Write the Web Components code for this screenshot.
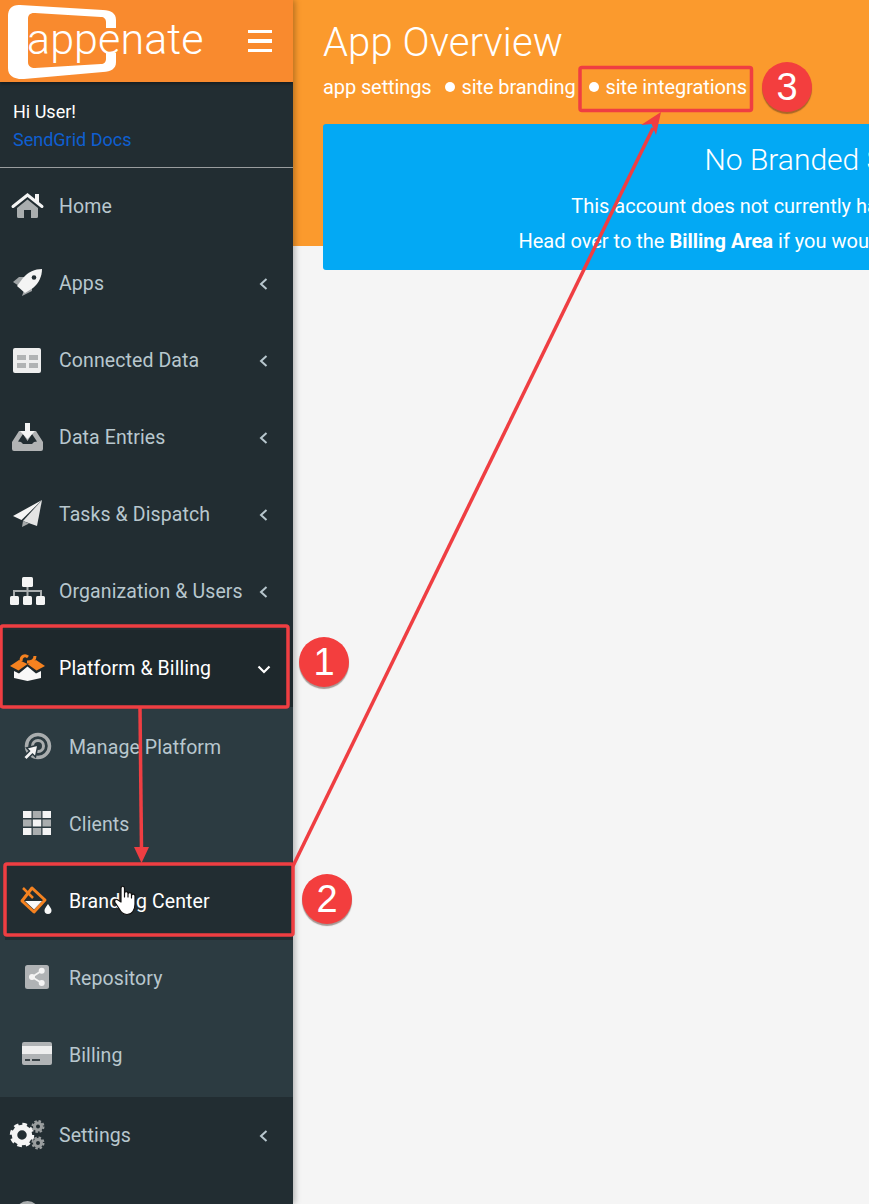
<!DOCTYPE html>
<html lang="en"><head><meta charset="utf-8"><title>App Overview</title>
<style>
html,body{margin:0;padding:0;height:1204px;overflow:hidden;background:#f5f5f5;font-family:Roboto,"Liberation Sans",sans-serif}
</style></head><body>
<app-shell>
  <side-bar slot="side">
    <nav-item label="Home" icon="home"></nav-item>
    <nav-item label="Apps" icon="rocket" chevron="left"></nav-item>
    <nav-item label="Connected Data" icon="table" chevron="left"></nav-item>
    <nav-item label="Data Entries" icon="inbox" chevron="left"></nav-item>
    <nav-item label="Tasks &amp; Dispatch" icon="plane" chevron="left"></nav-item>
    <nav-item label="Organization &amp; Users" icon="org" chevron="left"></nav-item>
    <nav-item label="Platform &amp; Billing" icon="box" chevron="down" active></nav-item>
    <nav-group>
      <nav-item sub label="Manage Platform" icon="target"></nav-item>
      <nav-item sub label="Clients" icon="grid"></nav-item>
      <nav-item sub label="Branding Center" icon="bucket" current></nav-item>
      <nav-item sub label="Repository" icon="share"></nav-item>
      <nav-item sub label="Billing" icon="card"></nav-item>
    </nav-group>
    <nav-item label="Settings" icon="gears" chevron="left"></nav-item>
    <nav-item label="" icon="circle"></nav-item>
  </side-bar>
  <page-header title="App Overview">
    <notice-box heading="No Branded Sites">
      <p>This account does not currently have any branded sites.</p>
      <p>Head over to the <b>Billing Area</b> if you would like to add a branded site.</p>
    </notice-box>
  </page-header>
  <guide-overlay slot="overlay"></guide-overlay>
</app-shell>
<script>
const ICONS={
home:`<path d="M7 17 17.5 8.5 28 17v8.5a1.5 1.5 0 0 1-1.5 1.5H21v-8h-7v8H8.500A1.500 1.500 0 0 1 7 25.500Z" fill="#a9adae"/><path d="M3 15.500 17.500 4 32 15.500" fill="none" stroke="#f4f4f4" stroke-width="3" stroke-linecap="round"/><path d="M25 3h4v9l-4-3Z" fill="#f4f4f4"/>`,
rocket:`<path d="M3 14 9 9h6l-6 9Z" fill="#9fa3a5"/><path d="M12 28l2-6 8-5v6Z" fill="#9fa3a5"/><path d="M32 1C25 1 18 4 13 10L7 18l8 7 8-5c6-5 9-12 9-19Z" fill="#f4f4f4"/><circle cx="24" cy="9.500" r="2.300" fill="#222d32"/>`,
table:`<rect x="3" y="3" width="28" height="25" rx="2" fill="#eeeeee"/><rect x="7" y="10" width="9" height="5" fill="#b1b3b4"/><rect x="19" y="10" width="9" height="5" fill="#b1b3b4"/><rect x="7" y="18" width="9" height="5" fill="#b1b3b4"/><rect x="19" y="18" width="9" height="5" fill="#b1b3b4"/>`,
inbox:`<path d="M9 9 2 20v7a2 2 0 0 0 2 2h27a2 2 0 0 0 2-2v-7L26 9h-3l-5.500 12L12 9Z" fill="#b1b3b4"/><path d="M6 19h6l2 3h7l2-3h6L24 10h-13Z" fill="#b1b3b4"/><path d="M8 19.500 13 12l4.500 7 4.500-7 5 7.500-3 .500-2 2h-9l-2-2Z" fill="#222d32"/><path d="M15 1h5v8h5l-7.500 8L10 9h5Z" fill="#f4f4f4"/>`,
plane:`<path d="M32 1 3 17l8.500 4Z" fill="#f4f4f4"/><path d="M32 1 13 22l14 5Z" fill="#e4e4e4"/><path d="M13 22l-1 6 7-3.500Z" fill="#a6a9aa"/>`,
org:`<path d="M17.500 11v9M4 20v-5h27v5" fill="none" stroke="#a9adae" stroke-width="2"/><rect x="12" y="1" width="11" height="10" rx="1.500" fill="#f4f4f4"/><rect x="0" y="20" width="9" height="9" rx="1.500" fill="#f4f4f4"/><rect x="13" y="20" width="9" height="9" rx="1.500" fill="#f4f4f4"/><rect x="26" y="20" width="9" height="9" rx="1.500" fill="#f4f4f4"/>`,
box:`<path d="M11 8C11 3 15 1.500 18 4M25 3c0 4-3 6-8 6" fill="none" stroke="#f58220" stroke-width="3"/><path d="M0 13 9 7l8.500 4-9 6.500Z" fill="#f58220"/><path d="M35 13 26 7l-8.500 4 9 6.500Z" fill="#f58220"/><path d="M4 18l5 2.500 8.500-7 8.500 7 5-2.500v7l-13.500 3L4 25Z" fill="#f8f8f8"/>`,
target:`<circle cx="18" cy="15" r="11.500" fill="none" stroke="#a9adae" stroke-width="3.500"/><circle cx="18" cy="15" r="5.500" fill="none" stroke="#a9adae" stroke-width="3"/><path d="M18 14 6.500 17l3 3L3.500 26l3 3 6-6 3 3Z" fill="#f4f4f4" stroke="#2c3b41" stroke-width="1.500"/>`,
grid:`<g fill="#f4f4f4"><rect x="3" y="3" width="8.500" height="7"/><rect x="22.500" y="3" width="8.500" height="7"/><rect x="12.750" y="11.500" width="8.500" height="7"/><rect x="3" y="20" width="8.500" height="7"/><rect x="22.500" y="20" width="8.500" height="7"/></g><g fill="#a9adae"><rect x="12.750" y="3" width="8.500" height="7"/><rect x="3" y="11.500" width="8.500" height="7"/><rect x="22.500" y="11.500" width="8.500" height="7"/><rect x="12.750" y="20" width="8.500" height="7"/></g>`,
bucket:`<path d="M12 3 25 15 14 27 2 16Z" fill="none" stroke="#f58220" stroke-width="3" stroke-linejoin="round"/><path d="M5 16h17l-8 8.500Z" fill="#f8f8f8"/><path d="M3 3 13 13" stroke="#f58220" stroke-width="2.500"/><path d="M28 19c-2 3-3.500 4.500-3.500 6.500a3.500 3.500 0 0 0 7 0c0-2-1.500-3.500-3.500-6.500Z" fill="#f8f8f8"/>`,
share:`<rect x="5" y="3" width="24" height="24" rx="2.500" fill="#b0b3b5"/><path d="M21.700 8.700 12 15l9.700 6" fill="none" stroke="#f4f4f4" stroke-width="1.800"/><circle cx="21.700" cy="8.700" r="3" fill="#f4f4f4"/><circle cx="12" cy="15" r="3" fill="#f4f4f4"/><circle cx="21.700" cy="21" r="3" fill="#f4f4f4"/>`,
card:`<rect x="2" y="3" width="30" height="23" rx="2" fill="#b0b3b5"/><rect x="2" y="7" width="30" height="8" fill="#eeeeee"/><rect x="5" y="20" width="5" height="2" fill="#3a4347"/><rect x="12" y="20" width="8" height="2" fill="#3a4347"/>`,
gears:`<circle cx="12" cy="15" r="7.500" fill="none" stroke="#f4f4f4" stroke-width="5.500"/><circle cx="12" cy="15" r="10.500" fill="none" stroke="#f4f4f4" stroke-width="3.500" stroke-dasharray="4.500 3.750"/><circle cx="28" cy="6.500" r="3.500" fill="none" stroke="#9a9e9f" stroke-width="3"/><circle cx="28" cy="6.500" r="5.500" fill="none" stroke="#9a9e9f" stroke-width="2" stroke-dasharray="2.500 1.800"/><circle cx="28" cy="23" r="3.500" fill="none" stroke="#9a9e9f" stroke-width="3"/><circle cx="28" cy="23" r="5.500" fill="none" stroke="#9a9e9f" stroke-width="2" stroke-dasharray="2.500 1.800"/>`,
circle:`<circle cx="17.500" cy="16" r="12" fill="#a9adae"/>`
};
function define(name,css,html,init){
  customElements.define(name,class extends HTMLElement{
    connectedCallback(){
      if(this.shadowRoot)return;
      const r=this.attachShadow({mode:'open'});
      r.innerHTML=`<style>${css}</style>`+(typeof html==='function'?html(this):html);
      if(init)init(this,r);
    }
  });
}
define('app-shell',`
  :host{display:block;position:relative;width:869px;height:1204px;overflow:hidden;background:#f5f5f5}
  .wrap{display:flex;height:100%}
  main{flex:1;min-width:0;overflow:hidden}
`,`<div class="wrap"><slot name="side"></slot><main><slot></slot></main></div><slot name="overlay"></slot>`);

define('side-bar',`
  :host{display:flex;flex-direction:column;flex:none;width:293px;height:1204px;overflow:hidden;background:#222d32;color:#b8c7ce;position:relative;z-index:2;box-shadow:2px 0 6px rgba(0,0,0,.28)}
  .brand{flex:none;height:82px;background:#f98a2e;display:flex;align-items:center;justify-content:space-between;padding:0 21px 0 7px;box-shadow:0 2px 3px rgba(0,0,0,.35);position:relative;box-sizing:border-box}
  .logo{position:relative;width:204px;height:78px;flex:none}
  .logo svg{position:absolute;left:0;top:0}
  .logo span{position:absolute;left:20px;top:9px;font:300 43px/56px Roboto,sans-serif;color:#fff;letter-spacing:.1px}
  .burger{display:flex;flex-direction:column;gap:6px;width:24px}
  .burger i{display:block;height:3.500px;background:#fff}
  .user{flex:none;height:86px;box-sizing:border-box;border-bottom:1px solid #9a9d9f;padding:16px 13px 0;font-size:18px;line-height:27.500px}
  .user div{color:#fff}
  .user a{color:#0f5fd0;text-decoration:none;display:block}
`,`<div class="brand"><div class="logo">
<svg width="110" height="78" viewBox="0 0 110 78"><path d="M13 3 96 8c8 .6 13 3 13 10v8H99v-6c0-3-2-5-5-5L28 11c-5-.3-7 2-7 6v43c0 4 3 6 7 6l66-4c3 0 5-2 5-5v-6h10v9c0 7-5 9.500-13 10L17 77C7 77.500 1 74 1 66V14C1 7 5 2.500 13 3Z" fill="#fff"/></svg>
<span>appenate</span></div><div class="burger"><i></i><i></i><i></i></div></div>
<div class="user"><div>Hi User!</div><a>SendGrid Docs</a></div><slot></slot>`);

define('nav-group',`:host{display:block;background:#2c3b41;padding-top:1.500px;padding-bottom:3.500px}`,`<slot></slot>`);

define('nav-item',`
  :host{display:flex;flex:none;align-items:center;height:77px;box-sizing:border-box;padding-left:10px;padding-right:21px;font-size:19.500px;color:#b8c7ce;letter-spacing:.1px}
  :host([sub]){padding-left:20px}
  :host([active]){background:#1e282c;color:#fff}
  :host([current]){background:#222d32;color:#fff;margin-left:5px;margin-right:0;padding-left:15px}
  svg.i{flex:none;width:36px;height:32px;margin-right:13px;overflow:visible}
  span{flex:1;white-space:nowrap}
  svg.c{flex:none;width:16px;height:16px}
`,h=>{
  const c=h.getAttribute('chevron');
  const chev=c==='left'?`<svg class="c" viewBox="0 0 16 16"><path d="M10.500 3 5 8l5.500 5" fill="none" stroke="currentColor" stroke-width="2"/></svg>`:
    c==='down'?`<svg class="c" viewBox="0 0 16 16"><path d="M2.500 5.500 8 11l5.500-5.500" fill="none" stroke="currentColor" stroke-width="2.200"/></svg>`:'';
  return `<svg class="i" viewBox="0 0 36 32">${ICONS[h.getAttribute('icon')]}</svg><span>${(h.getAttribute('label')||'').replace(/&/g,'&amp;')}</span>${chev}`;
});

define('page-header',`
  :host{display:block;height:246px;background:#fb9a2d;padding:16px 0 0 30px;box-sizing:border-box;color:#fff}
  h1{margin:0;font:300 40px/54px Roboto,sans-serif;letter-spacing:.1px}
  nav{display:flex;align-items:center;height:34px;font-size:20px;white-space:nowrap;margin-bottom:20px;letter-spacing:-.1px}
  nav span{display:flex;align-items:center}
  nav span+span{margin-left:13px}
  nav i{display:inline-block;width:10px;height:10px;border-radius:50%;background:#fff;margin-right:7px}
`,h=>`<h1>${h.getAttribute('title')}</h1><nav><span>app settings</span><span><i></i>site branding</span><span><i></i>site integrations</span></nav><slot></slot>`);

define('notice-box',`
  :host{display:block;width:990px;height:146px;box-sizing:border-box;background:#03a9f4;border-radius:3px;color:#fff;text-align:center;padding:16px 20px 0;font-size:20px;white-space:nowrap}
  h2{margin:0 0 12px;font:300 30px/40px Roboto,sans-serif}
  ::slotted(p){margin:0 0 7px;line-height:28px}
`,h=>`<h2>${h.getAttribute('heading')}</h2><slot></slot>`);

define('guide-overlay',`
  :host{display:block;position:absolute;inset:0;z-index:5;pointer-events:none}
  svg{position:absolute;inset:0}
  .b{position:absolute;width:50px;height:50px;border-radius:50%;background:#f33e3e;color:#fff;display:flex;align-items:center;justify-content:center;font:400 38px/1 "Liberation Sans",sans-serif;box-shadow:0 2px 1px rgba(70,40,30,.45)}
`,`<svg width="869" height="1204" viewBox="0 0 869 1204" fill="none">
<g stroke="#ef3e42" stroke-width="3.500">
<rect x="1" y="626" width="287" height="81" rx="2"/>
<rect x="5" y="864" width="288" height="71" rx="2"/>
<rect x="580" y="67.500" width="171.500" height="43" rx="2"/>
<path d="M140 708 141.500 850"/>
<path d="M293 866 653 128"/>
</g>
<g fill="#ef3e42"><path d="M134 847 149 847 141.500 863Z"/><path d="M661 112 656 135 651.500 124 641 125Z"/></g>
<path d="M121 902V888.500c0-3 3.500-3 3.500 0V897v-3.500c0-2.500 3.500-2.500 3.500 0V897v-2.500c0-2.500 3.500-2.500 3.500 0V898v-2c0-2.500 3.500-2.500 3.500 0v8c0 6-3 10.500-8 10.500-4 0-6-2-8-6l-4-6c-1.500-2.500 1.500-4 3-2.500Z" fill="#fff" stroke="#111" stroke-width="1.200" stroke-linejoin="round"/>
</svg>
<div class="b" style="left:299px;top:637px">1</div>
<div class="b" style="left:302px;top:874px">2</div>
<div class="b" style="left:762px;top:62px">3</div>`);
</script>
</body></html>
